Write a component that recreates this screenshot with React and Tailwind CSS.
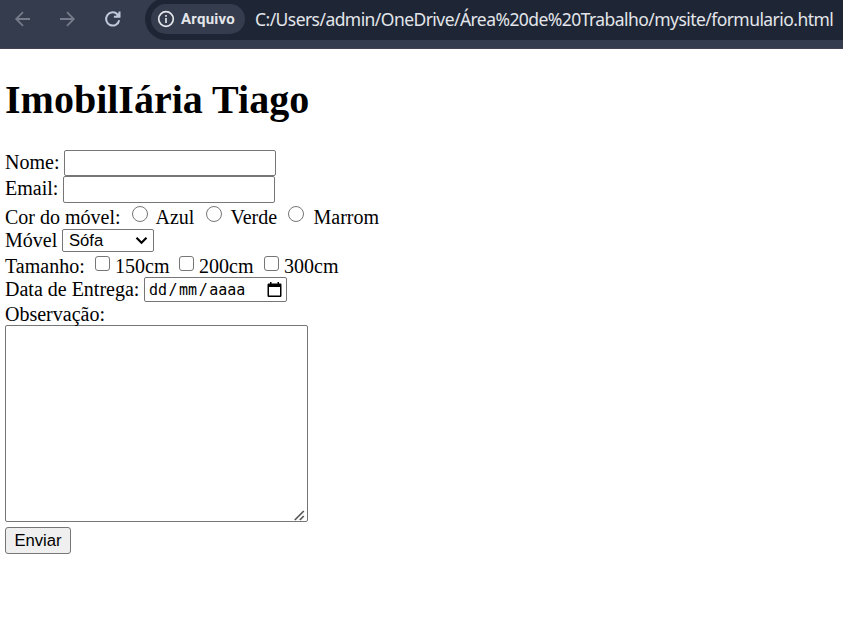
import React from "react";

function ToolbarIcons() {
  return (
    <>
      <svg className="ml-[14px] shrink-0" width="18" height="18" viewBox="0 0 18 18" fill="none" stroke="#757b88" strokeWidth="1.8">
        <path d="M16 9H2.5M9 2.2L2.2 9L9 15.8" />
      </svg>
      <svg className="ml-[27px] shrink-0" width="18" height="18" viewBox="0 0 18 18" fill="none" stroke="#757b88" strokeWidth="1.8">
        <path d="M1 9h13.500M8 2.200L14.800 9L8 15.800" />
      </svg>
      <svg className="ml-[27px] shrink-0" width="18" height="18" viewBox="0 0 18 18" fill="none" stroke="#c0c8dc" strokeWidth="2">
        <path d="M15.200 10.200A6.600 6.600 0 1 1 13.600 4.500L15.200 6.300M15.500 1.500V6.800H9.900" />
        <path d="M15.500 2.500V6.800H11.200Z" fill="#c0c8dc" stroke="none" />
      </svg>
    </>
  );
}

function BrowserBar() {
  return (
    <header className="flex h-[49px] items-start overflow-hidden border-b border-[#454351] bg-[#343c4d] font-['Noto_Sans','Open_Sans',sans-serif]">
      <div className="flex h-[38px] w-[145px] shrink-0 items-center">
        <ToolbarIcons />
      </div>
      <div className="-mt-[2px] flex h-[42px] w-[740px] shrink-0 items-center rounded-l-full bg-[#1e2635] pl-[6px]">
        <div className="flex h-[30px] w-[94px] shrink-0 items-center rounded-full bg-[#343c4d] pl-[6px]">
          <svg className="shrink-0" width="18" height="18" viewBox="0 0 18 18" fill="none" stroke="#e3e5ea" strokeWidth="1.700">
            <circle cx="9" cy="9" r="7.300" />
            <path d="M9 8v5M9 5v1.800" />
          </svg>
          <span className="ml-[6px] font-['Roboto',sans-serif] text-[15px] font-bold leading-5 tracking-[0.25px] text-[#e3e5ea]">Arquivo</span>
        </div>
        <span className="ml-[10px] whitespace-nowrap text-[17.5px] leading-6 tracking-[-0.56px] text-[#e3e5ea]">
          C:/Users/admin/OneDrive/Área%20de%20Trabalho/mysite/formulario.html
        </span>
      </div>
    </header>
  );
}

function Radio({ label, className, textClass }) {
  return (
    <label className={"flex shrink-0 " + className}>
      <input type="radio" name="cor" className="mt-[1px] size-[15.5px] shrink-0 appearance-none rounded-full border border-[#767676] bg-white" />
      <span className={textClass}>{label}</span>
    </label>
  );
}

function Check({ label, className }) {
  return (
    <label className={"flex shrink-0 " + className}>
      <input type="checkbox" className="mt-[2px] size-[15px] shrink-0 appearance-none rounded-[3px] border border-[#767676] bg-white" />
      <span className="ml-[5px]">{label}</span>
    </label>
  );
}

const field = "shrink-0 rounded-[2px] border border-[#767676] bg-white";

export default function App() {
  return (
    <div className="h-[638px] w-[843px] overflow-hidden bg-white text-black">
      <BrowserBar />
      <main className="whitespace-nowrap pl-[5px] font-['Liberation_Serif',serif] text-[20px] leading-[25px]">
        <h1 className="h-[101px] pt-[28px] text-[40px] font-bold leading-[46px]">ImobilIária Tiago</h1>
        <form>
          <div className="flex h-[26px] items-start">
            <label className="w-[59px] shrink-0">Nome:</label>
            <input className={field + " h-[26px] w-[212px]"} />
          </div>
          <div className="flex h-[29px] items-start">
            <label className="w-[58px] shrink-0">Email:</label>
            <input className={field + " h-[27px] w-[212px]"} />
          </div>
          <div className="flex h-[23px] items-start">
            <span className="w-[127px] shrink-0">Cor do móvel:</span>
            <Radio label="Azul" className="w-[74px]" textClass="ml-[8px]" />
            <Radio label="Verde" className="w-[82px]" textClass="ml-[9px]" />
            <Radio label="Marrom" className="w-[100px]" textClass="ml-[10px]" />
          </div>
          <div className="flex h-[26px] items-start">
            <label className="w-[57px] shrink-0">Móvel</label>
            <div className={field + " mt-[1px] flex h-[23px] w-[92px] items-center justify-between pl-[6px] pr-[5px]"}>
              <span className="font-['Liberation_Sans',sans-serif] text-[16.67px] leading-5">Sófa</span>
              <svg width="13" height="9" viewBox="0 0 13 9" fill="none" stroke="#000" strokeWidth="2.200">
                <path d="M1.500 1.800L6.500 6.800L11.500 1.800" />
              </svg>
            </div>
          </div>
          <div className="flex h-[23px] items-start">
            <span className="w-[90px] shrink-0">Tamanho:</span>
            <Check label="150cm" className="w-[84px]" />
            <Check label="200cm" className="w-[85px]" />
            <Check label="300cm" className="w-[85px]" />
          </div>
          <div className="flex h-[25px] items-start">
            <label className="w-[139px] shrink-0">Data de Entrega:</label>
            <div className={field + " flex h-[25px] w-[143px] items-center justify-between pl-1 pr-1"}>
              <span className="flex gap-[1.5px] font-['DejaVu_Sans_Mono',monospace] text-[15px] leading-5">
                <span>dd</span><span>/</span><span>mm</span><span>/</span><span>aaaa</span>
              </span>
              <svg width="15" height="16" viewBox="0 0 15 16">
                <path fill="#000" fillRule="evenodd" d="M3 0h1.500v1.500h6V0h1.500v1.500h1.500Q14.500 1.500 14.500 2.800v11Q14.500 15 13.300 15h-11.600Q.5 15 .5 13.800V2.800Q.5 1.500 1.700 1.500H3ZM2 5v8.500h11V5Z" />
              </svg>
            </div>
          </div>
          <div className="h-[23px]">Observação:</div>
          <div className={field + " flex h-[197px] w-[303px] items-end justify-end pr-[2px]"}>
            <svg width="11" height="11" viewBox="0 0 11 11" fill="none" stroke="#555" strokeWidth="1.700">
              <path d="M.8 10L9.800 1M5.800 10L9.800 6" />
            </svg>
          </div>
          <button type="button" className="mt-[5px] block h-[27px] w-[66px] rounded-[3px] border border-[#767676] bg-[#efefef] font-['Liberation_Sans',sans-serif] text-[16.67px] leading-5">
            Enviar
          </button>
        </form>
      </main>
    </div>
  );
}
